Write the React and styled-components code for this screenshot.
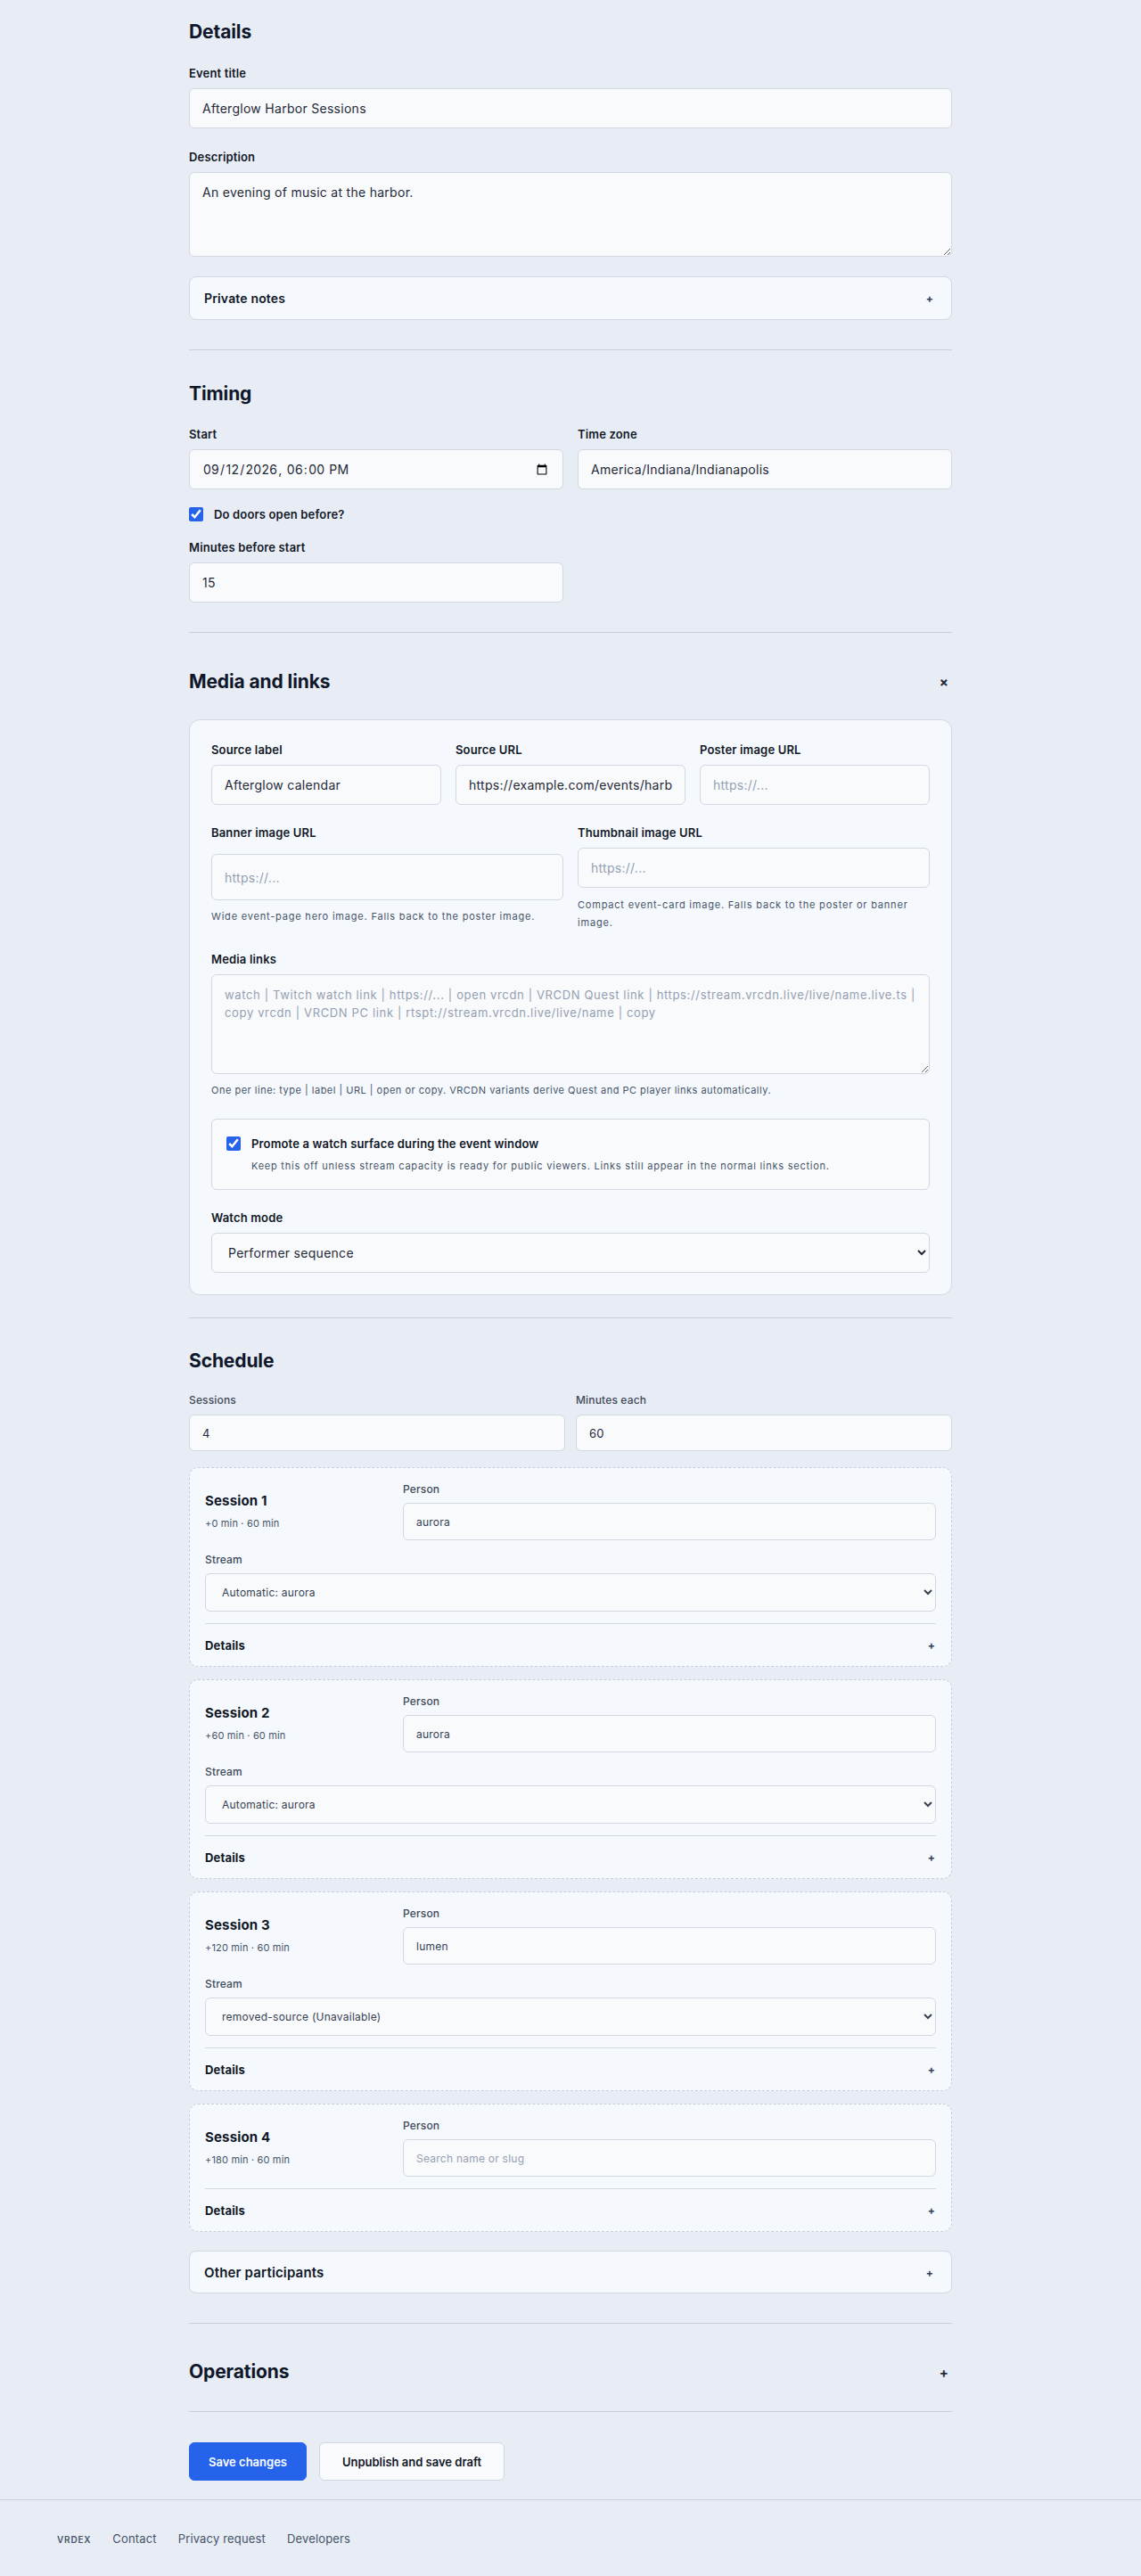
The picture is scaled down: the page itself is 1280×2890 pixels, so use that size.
import styled, {createGlobalStyle} from "styled-components"

//styles
const GlobalStyle = createGlobalStyle`
html, body {
margin: 0;
padding: 0;
background: #e8ecf4;
}
body {
font-family: Inter, "Noto Sans", "DejaVu Sans", sans-serif;
color: #111827;
letter-spacing: 0.01em;
}
*, *::before, *::after {
box-sizing: border-box;
}
`

const Page = styled.div`
min-height: 2890px;
display: flex;
flex-direction: column;
`

const Main = styled.main`
width: 856px;
margin: 0 auto;
padding-top: 22px;
`

const Section = styled.section`
padding: ${p => p.$top ?? 35}px 0 ${p => p.$bottom ?? 33}px;
`

const SectionTitle = styled.h2`
margin: 0 0 ${p => p.$gap ?? 22}px;
font-size: 21px;
line-height: 28px;
font-weight: 700;
letter-spacing: -0.005em;
color: #0f172a;
`

const SectionHeader = styled.div`
display: flex;
align-items: center;
justify-content: space-between;
height: 40px;
margin-bottom: ${p => p.$gap ?? 0}px;

h2 {
margin: 0;
}
`

const HeaderToggle = styled.span`
font-size: 15px;
font-weight: 700;
color: #1f2937;
padding-right: 4px;
`

const Divider = styled.hr`
margin: 0;
border: 0;
border-top: 1px solid #c8cfdb;
`

const Stack = styled.div`
display: flex;
flex-direction: column;
gap: ${p => p.$gap ?? 22}px;
`

const Grid = styled.div`
display: grid;
grid-template-columns: repeat(${p => p.$cols ?? 2}, 1fr);
gap: ${p => p.$gap ?? 16}px;
align-items: start;
`

const Field = styled.label`
display: flex;
flex-direction: column;
gap: ${p => p.$gap ?? 8}px;
`

const Label = styled.span`
font-size: 13px;
line-height: 18px;
font-weight: 600;
color: #111827;
`

const SmallLabel = styled.span`
font-size: 12px;
line-height: 16px;
font-weight: 500;
color: #3f4a5a;
`

const TextInput = styled.input`
height: ${p => p.$h ?? 45}px;
width: 100%;
margin-top: ${p => p.$mt ?? 0}px;
padding: 0 14px;
border: 1px solid #d2d8e1;
border-radius: 6px;
background: #f9fafc;
font-family: inherit;
font-size: ${p => p.$fs ?? 14}px;
letter-spacing: 0.02em;
color: ${p => p.$muted ? "#334155" : "#1f2937"};
outline: none;

&::placeholder {
color: #94a0b2;
}
`

const TextArea = styled.textarea`
height: ${p => p.$h ?? 95}px;
width: 100%;
padding: 12px 14px;
border: 1px solid #d2d8e1;
border-radius: 6px;
background: #f9fafc;
font-family: inherit;
font-size: ${p => p.$fs ?? 14}px;
line-height: 20px;
letter-spacing: ${p => p.$ls ?? 0.02}em;
color: #1f2937;
resize: vertical;
outline: none;

&::placeholder {
color: #94a0b2;
}
`

const Select = styled.select`
height: ${p => p.$h ?? 45}px;
width: 100%;
padding: 0 14px;
border: 1px solid #d2d8e1;
border-radius: 6px;
background: #f9fafc;
font-family: inherit;
font-size: ${p => p.$small ? 12 : 14}px;
letter-spacing: 0.02em;
color: ${p => p.$small ? "#374151" : "#1f2937"};
outline: none;
`

const Hint = styled.span`
display: block;
margin-top: ${p => p.$mt ?? 0}px;
font-size: 11px;
line-height: 20px;
color: #475569;
letter-spacing: ${p => p.$ls ?? 0.8}px;
`

const CheckRow = styled.label`
display: flex;
align-items: center;
gap: 12px;
font-size: 13px;
line-height: 18px;
font-weight: 600;
color: #111827;
`

const Check = styled.input.attrs({type: "checkbox"})`
margin: 0;
width: 16px;
height: 16px;
accent-color: #2563eb;
flex-shrink: 0;
`

const Disclosure = styled.div`
display: flex;
align-items: center;
justify-content: space-between;
height: ${p => p.$h ?? 49}px;
padding: 0 20px 0 16px;
border: 1px solid #d2d8e1;
border-radius: 8px;
background: #f5f8fc;
`

const DisclosureTitle = styled.span`
font-size: ${p => p.$fs ?? 14}px;
font-weight: 600;
color: #111827;
`

const Plus = styled.span`
font-size: 12px;
font-weight: 700;
color: #334155;
`

const Panel = styled.div`
padding: 24px;
border: 1px solid #d2d8e1;
border-radius: 12px;
background: #f5f8fc;
`

const PromoteBox = styled.div`
padding: 18px 16px 17px;
border: 1px solid #d2d8e1;
border-radius: 6px;
background: #f9fafc;
`

const PromoteNote = styled.p`
margin: 7px 0 0 28px;
font-size: 11px;
line-height: 18px;
letter-spacing: 0.75px;
color: #475569;
`

const SessionList = styled.div`
display: flex;
flex-direction: column;
gap: 14px;
`

const SessionCard = styled.div`
padding: 16px 17px 0;
border: 1px dashed #c6cedb;
border-radius: 10px;
background: #f5f8fc;
`

const SessionTop = styled.div`
display: grid;
grid-template-columns: 206px 1fr;
column-gap: 16px;
align-items: center;
`

const SessionName = styled.div`
font-size: 15px;
line-height: 20px;
font-weight: 700;
color: #111827;
`

const SessionMeta = styled.div`
margin-top: 7px;
font-size: 11px;
line-height: 16px;
color: #475569;
`

const StreamField = styled(Field)`
margin-top: 14px;
`

const SessionDetails = styled.div`
display: flex;
align-items: center;
justify-content: space-between;
height: 48px;
margin-top: 13px;
padding-right: 1px;
border-top: 1px solid #d3d9e2;
font-size: 13px;
font-weight: 700;
color: #111827;
`

const Actions = styled.div`
display: flex;
gap: 14px;
padding: 34px 0 21px;
`

const Button = styled.button`
height: 43px;
width: ${p => p.$w}px;
border-radius: 6px;
font-family: inherit;
font-size: 13px;
font-weight: 600;
cursor: pointer;
border: 1px solid ${p => p.$primary ? "#2563eb" : "#d2d8e1"};
background: ${p => p.$primary ? "#2563eb" : "#f9fafc"};
color: ${p => p.$primary ? "#ffffff" : "#111827"};
`

const Footer = styled.footer`
flex: 1;
display: flex;
gap: 24px;
align-items: baseline;
padding: 34px 64px 0;
border-top: 1px solid #c8cfdb;
`

const Brand = styled.span`
font-size: 10px;
font-weight: 600;
letter-spacing: 0.08em;
color: #475569;
`

const FooterLink = styled.a`
font-size: 13px;
line-height: 18px;
color: #475569;
text-decoration: none;
`

const sessions = [
    {n: 1, meta: "+0 min · 60 min", person: "aurora", stream: "Automatic: aurora"},
    {n: 2, meta: "+60 min · 60 min", person: "aurora", stream: "Automatic: aurora"},
    {n: 3, meta: "+120 min · 60 min", person: "lumen", stream: "removed-source (Unavailable)"},
    {n: 4, meta: "+180 min · 60 min", person: "", stream: null},
]

const mediaPlaceholder =
    "watch | Twitch watch link | https://... | open vrcdn | VRCDN Quest link | https://stream.vrcdn.live/live/name.live.ts |\ncopy vrcdn | VRCDN PC link | rtspt://stream.vrcdn.live/live/name | copy"

function Session({n, meta, person, stream}){
    return(
        <SessionCard>
            <SessionTop>
                <div>
                    <SessionName>Session {n}</SessionName>
                    <SessionMeta>{meta}</SessionMeta>
                </div>
                <Field $gap={7}>
                    <SmallLabel>Person</SmallLabel>
                    <TextInput $muted $fs={12} $h={42} defaultValue={person} placeholder="Search name or slug"/>
                </Field>
            </SessionTop>
            {stream && (
                <StreamField $gap={7}>
                    <SmallLabel>Stream</SmallLabel>
                    <Select $small $h={43} defaultValue={stream}>
                        <option>{stream}</option>
                    </Select>
                </StreamField>
            )}
            <SessionDetails>
                <span>Details</span>
                <Plus>+</Plus>
            </SessionDetails>
        </SessionCard>
    )
}

export default function App(){

    return(
        <>
        <GlobalStyle/>
        <Page>
            <Main>

{/* Details */}
                <Section $top={0}>
                    <SectionTitle $gap={23}>Details</SectionTitle>
                    <Stack $gap={23}>
                        <Field>
                            <Label>Event title</Label>
                            <TextInput defaultValue="Afterglow Harbor Sessions"/>
                        </Field>
                        <Stack $gap={22}>
                            <Field>
                                <Label>Description</Label>
                                <TextArea defaultValue="An evening of music at the harbor."/>
                            </Field>
                            <Disclosure>
                                <DisclosureTitle>Private notes</DisclosureTitle>
                                <Plus>+</Plus>
                            </Disclosure>
                        </Stack>
                    </Stack>
                </Section>
                <Divider/>

{/* Timing */}
                <Section>
                    <SectionTitle>Timing</SectionTitle>
                    <Stack $gap={19}>
                        <Grid>
                            <Field>
                                <Label>Start</Label>
                                <TextInput type="datetime-local" defaultValue="2026-09-12T18:00"/>
                            </Field>
                            <Field>
                                <Label>Time zone</Label>
                                <TextInput defaultValue="America/Indiana/Indianapolis"/>
                            </Field>
                        </Grid>
                        <CheckRow>
                            <Check defaultChecked/>
                            Do doors open before?
                        </CheckRow>
                        <Grid>
                            <Field>
                                <Label>Minutes before start</Label>
                                <TextInput defaultValue="15"/>
                            </Field>
                        </Grid>
                    </Stack>
                </Section>
                <Divider/>

{/* Media and links */}
                <Section $bottom={25}>
                    <SectionHeader $gap={22}>
                        <SectionTitle>Media and links</SectionTitle>
                        <HeaderToggle>×</HeaderToggle>
                    </SectionHeader>
                    <Panel>
                        <Stack $gap={22}>
                            <Grid $cols={3}>
                                <Field>
                                    <Label>Source label</Label>
                                    <TextInput defaultValue="Afterglow calendar"/>
                                </Field>
                                <Field>
                                    <Label>Source URL</Label>
                                    <TextInput defaultValue="https://example.com/events/harbor-sessions"/>
                                </Field>
                                <Field>
                                    <Label>Poster image URL</Label>
                                    <TextInput placeholder="https://..."/>
                                </Field>
                            </Grid>
                            <Grid>
                                <Field>
                                    <Label>Banner image URL</Label>
                                    <TextInput $h={52} $mt={7} placeholder="https://..."/>
                                    <Hint>Wide event-page hero image. Falls back to the poster image.</Hint>
                                </Field>
                                <Field>
                                    <Label>Thumbnail image URL</Label>
                                    <TextInput placeholder="https://..."/>
                                    <Hint $mt={1}>Compact event-card image. Falls back to the poster or banner image.</Hint>
                                </Field>
                            </Grid>
                            <Field>
                                <Label>Media links</Label>
                                <TextArea $h={112} $fs={13} $ls={0.05} placeholder={mediaPlaceholder}/>
                                <Hint $ls={0.5}>One per line: type | label | URL | open or copy. VRCDN variants derive Quest and PC player links automatically.</Hint>
                            </Field>
                            <PromoteBox>
                                <CheckRow>
                                    <Check defaultChecked/>
                                    Promote a watch surface during the event window
                                </CheckRow>
                                <PromoteNote>Keep this off unless stream capacity is ready for public viewers. Links still appear in the normal links section.</PromoteNote>
                            </PromoteBox>
                            <Field>
                                <Label>Watch mode</Label>
                                <Select defaultValue="Performer sequence">
                                    <option>Performer sequence</option>
                                </Select>
                            </Field>
                        </Stack>
                    </Panel>
                </Section>
                <Divider/>

{/* Schedule */}
                <Section $top={34}>
                    <SectionTitle>Schedule</SectionTitle>
                    <Stack $gap={18}>
                        <Grid $gap={12}>
                            <Field>
                                <SmallLabel>Sessions</SmallLabel>
                                <TextInput $h={41} $fs={13} defaultValue="4"/>
                            </Field>
                            <Field>
                                <SmallLabel>Minutes each</SmallLabel>
                                <TextInput $h={41} $fs={13} defaultValue="60"/>
                            </Field>
                        </Grid>
                        <Stack $gap={21}>
                            <SessionList>
                                {sessions.map(s => <Session key={s.n} {...s}/>)}
                            </SessionList>
                            <Disclosure $h={48}>
                                <DisclosureTitle $fs={15}>Other participants</DisclosureTitle>
                                <Plus>+</Plus>
                            </Disclosure>
                        </Stack>
                    </Stack>
                </Section>
                <Divider/>

{/* Operations */}
                <Section $top={34} $bottom={24}>
                    <SectionHeader>
                        <SectionTitle>Operations</SectionTitle>
                        <HeaderToggle>+</HeaderToggle>
                    </SectionHeader>
                </Section>
                <Divider/>

                <Actions>
                    <Button $primary $w={132}>Save changes</Button>
                    <Button $w={208}>Unpublish and save draft</Button>
                </Actions>
            </Main>

            <Footer>
                <Brand>VRDEX</Brand>
                <FooterLink href="#">Contact</FooterLink>
                <FooterLink href="#">Privacy request</FooterLink>
                <FooterLink href="#">Developers</FooterLink>
            </Footer>
        </Page>
        </>
    )
}
